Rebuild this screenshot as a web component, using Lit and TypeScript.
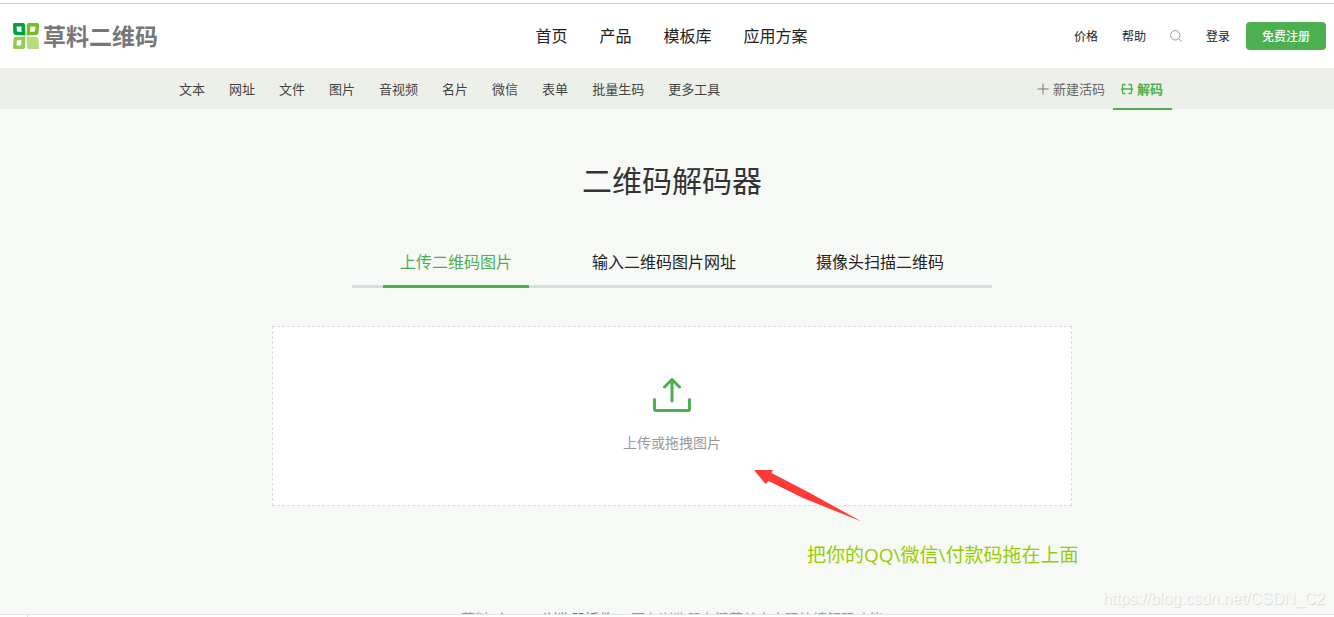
import { LitElement, html, css, svg } from "lit";
import { customElement, state } from "lit/decorators.js";

const mainLinks = ["首页", "产品", "模板库", "应用方案"];
const typeLinks = ["文本", "网址", "文件", "图片", "音视频", "名片", "微信", "表单", "批量生码", "更多工具"];
const decodeTabs = ["上传二维码图片", "输入二维码图片网址", "摄像头扫描二维码"];

const logoMark = svg`
  <path fill="#00a23f" fill-rule="evenodd" d="M1.500 0H10Q12 0 12 2L12.500 12.500L2.500 12Q0.500 11.500 0.300 10L0 1.500Q0 0 1.500 0ZM3.500 3.500L4 8.500L8.500 9V3.500Z"/>
  <path fill="#76bd22" fill-rule="evenodd" d="M16 0H24.500Q26 0 26 1.500L25.500 10Q25 12 23 12L13.500 12.500L14 2Q14 0 16 0ZM17.500 3.500L17 9L22 8.500L22.500 3.500Z"/>
  <path fill="#94c955" fill-rule="evenodd" d="M2.500 14L12.500 13.500L12 24Q12 26 10 26H1.500Q0 26 0 24.500L0.500 16Q0.500 14 2.500 14ZM4 17.500L3.500 22.500H8L8.500 17Z"/>
  <path fill="#b8dc80" d="M13.500 13.500L23 14Q25 14 25.500 16L26 24.500Q26 26 24.500 26H16Q14 26 14 24Z"/>`;

@customElement("app-root")
export class AppRoot extends LitElement {
  @state() private activeTab = 0;

  static styles = css`
    :host {
      display: flex;
      flex-direction: column;
      height: 100vh;
      background: #fff;
      color: #222;
      font-family: "Noto Sans CJK SC", "Microsoft YaHei", sans-serif;
      font-size: 13px;
      line-height: 20px;
    }
    * { box-sizing: border-box; }
    a { color: inherit; text-decoration: none; }
    button { font: inherit; color: inherit; border: 0; background: none; padding: 0; cursor: pointer; }
    svg { display: block; }
    .header {
      display: grid;
      grid-template-columns: 1fr auto 1fr;
      align-items: center;
      flex: none;
      height: 65px;
      margin-top: 3px;
      padding: 0 8px 0 13px;
      border-top: 1px solid #ccc;
    }
    .logo { display: flex; align-items: center; gap: 4px; color: #777; font-size: 23px; line-height: 28px; font-weight: 700; }
    .logo span { padding-bottom: 2px; }
    .main-nav { display: flex; gap: 32px; padding: 0 0 2px 4px; font-size: 16px; line-height: 24px; }
    .account { display: flex; align-items: center; justify-content: flex-end; gap: 24px; font-size: 12px; }
    .entry { display: flex; align-items: center; gap: 16px; }
    .register { padding: 4px 16px; border-radius: 4px; background: #4caf50; color: #fff; font-weight: 500; }
    .subnav { position: relative; flex: none; padding-left: 10px; background: #edf0e9; color: #444; }
    .subnav-inner {
      display: flex;
      justify-content: space-between;
      max-width: 1000px;
      height: 41px;
      margin: 0 auto;
      padding-left: 7px;
    }
    .types { display: flex; align-items: center; gap: 24px; }
    .tools { display: flex; }
    .tool { display: flex; align-items: center; gap: 4px; padding: 0 8px; color: #666; }
    .tool.current {
      margin-bottom: -1px;
      padding: 1px 9px 0 8px;
      border-bottom: 2px solid #4caf50;
      color: #4caf50;
      font-weight: 700;
    }
    .main {
      flex: 1;
      min-height: 0;
      overflow: hidden;
      display: flex;
      flex-direction: column;
      align-items: center;
      padding: 46px 0 0 10px;
      background: #f7f9f7;
    }
    .title { margin: 0; font-size: 30px; line-height: 48px; font-weight: 400; color: #333; }
    .tabs {
      display: flex;
      justify-content: center;
      gap: 46px;
      width: 100%;
      max-width: 640px;
      margin-top: 44px;
      box-shadow: inset 0 -3px #d9dddb;
      font-size: 16px;
      line-height: 24px;
    }
    .tab { padding: 2px 17px 12px; border-bottom: 3px solid transparent; }
    .tab.current { border-color: #4caf50; color: #4caf50; }
    .drop-wrap { position: relative; width: 100%; max-width: 800px; margin-top: 38px; }
    .drop {
      display: flex;
      flex-direction: column;
      align-items: center;
      gap: 19px;
      padding: 51px 0 52px;
      border: 1px dashed #d9dddb;
      background: #fff;
      color: #999;
      font-size: 14px;
      line-height: 22px;
      cursor: pointer;
    }
    .file { position: absolute; width: 1px; height: 1px; opacity: 0; }
    .arrow { position: absolute; left: 481px; top: 143px; }
    .note {
      position: absolute;
      left: 535px;
      top: 215px;
      margin: 0;
      white-space: nowrap;
      color: #99cc00;
      font-family: "Open Sans", "Noto Sans CJK SC", sans-serif;
      font-size: 19px;
      line-height: 28px;
    }
    .tip { margin: 101px 0 0; white-space: nowrap; color: #999; font-size: 14px; line-height: 22px; }
    .tip a { margin: 0 4px; color: #337ab7; }
    .footer { flex: none; height: 3px; padding-left: 27px; border-top: 1px solid #e3e5e3; }
    .divider { width: 1px; height: 2px; background: #ddd; }
    .watermark {
      position: absolute;
      right: 9px;
      bottom: 8px;
      color: #f9fbf9;
      text-shadow: 1px 1px 1px #d4d6d4;
      font-family: "Liberation Sans", Arial, sans-serif;
      font-size: 16px;
    }
  `;

  render() {
    return html`
      <header class="header">
        <a class="logo" href="#">
          <svg width="26" height="26" viewBox="0 0 26 26" aria-hidden="true">${logoMark}</svg>
          <span>草料二维码</span>
        </a>
        <nav class="main-nav">${mainLinks.map((t) => html`<a href="#">${t}</a>`)}</nav>
        <div class="account">
          <a href="#">价格</a>
          <a href="#">帮助</a>
          <button aria-label="搜索">
            <svg width="12" height="12" viewBox="0 0 12 12" fill="none" stroke="#999">
              <circle cx="5.300" cy="5.300" r="4.700" /><path d="M8.700 8.700L11.500 11.500" />
            </svg>
          </button>
          <div class="entry">
            <a href="#">登录</a>
            <button class="register">免费注册</button>
          </div>
        </div>
      </header>
      <nav class="subnav">
        <div class="subnav-inner">
          <div class="types">${typeLinks.map((t) => html`<a href="#">${t}</a>`)}</div>
          <div class="tools">
            <a class="tool" href="#">
              <svg width="12" height="12" viewBox="0 0 12 12" stroke="#777"><path d="M6 0.500V11.500M0.500 6H11.500" /></svg>
              新建活码
            </a>
            <a class="tool current" href="#">
              <svg width="12" height="12" viewBox="0 0 12 12" fill="none" stroke="#4caf50" stroke-width="1.300">
                <path d="M4.500 1.500H2.500Q1.500 1.500 1.500 2.500V9.500Q1.500 10.500 2.500 10.500H4.500M7.500 1.500H9.500Q10.500 1.500 10.500 2.500V9.500Q10.500 10.500 9.500 10.500H7.500M0 6H12" />
              </svg>
              解码
            </a>
          </div>
        </div>
      </nav>
      <main class="main">
        <h1 class="title">二维码解码器</h1>
        <div class="tabs" role="tablist">
          ${decodeTabs.map(
            (t, i) => html`<button
              role="tab"
              class="tab ${i === this.activeTab ? "current" : ""}"
              aria-selected=${i === this.activeTab ? "true" : "false"}
              @click=${() => (this.activeTab = i)}
            >${t}</button>`
          )}
        </div>
        <div class="drop-wrap">
          <input class="file" id="file" type="file" accept="image/*" />
          <label class="drop" for="file">
            <svg width="38" height="34" viewBox="0 0 38 34" fill="none" stroke="#4caf50" stroke-width="3" stroke-linecap="round" stroke-linejoin="round">
              <path d="M1.500 21.500V31Q1.500 32.500 3 32.500H35Q36.500 32.500 36.500 31V21.500M19 23V2M11.500 9L19 1.500L26.500 9" />
            </svg>
            <span>上传或拖拽图片</span>
          </label>
          <svg class="arrow" width="109" height="54" viewBox="0 0 109 54" aria-hidden="true">
            <path fill="#ff3b38" d="M1 1H20L18.500 4L56 23.500L108.500 52.500L50 29L15.500 12L12.500 15Z" />
          </svg>
          <p class="note">把你的QQ\\微信\\付款码拖在上面</p>
        </div>
        <p class="tip">草料<a href="#">chrome浏览器插件</a>，可在浏览器右键菜单中实现快捷解码功能</p>
      </main>
      <footer class="footer"><div class="divider"></div></footer>
      <span class="watermark">https://blog.csdn.net/CSDN_C2</span>
    `;
  }
}
